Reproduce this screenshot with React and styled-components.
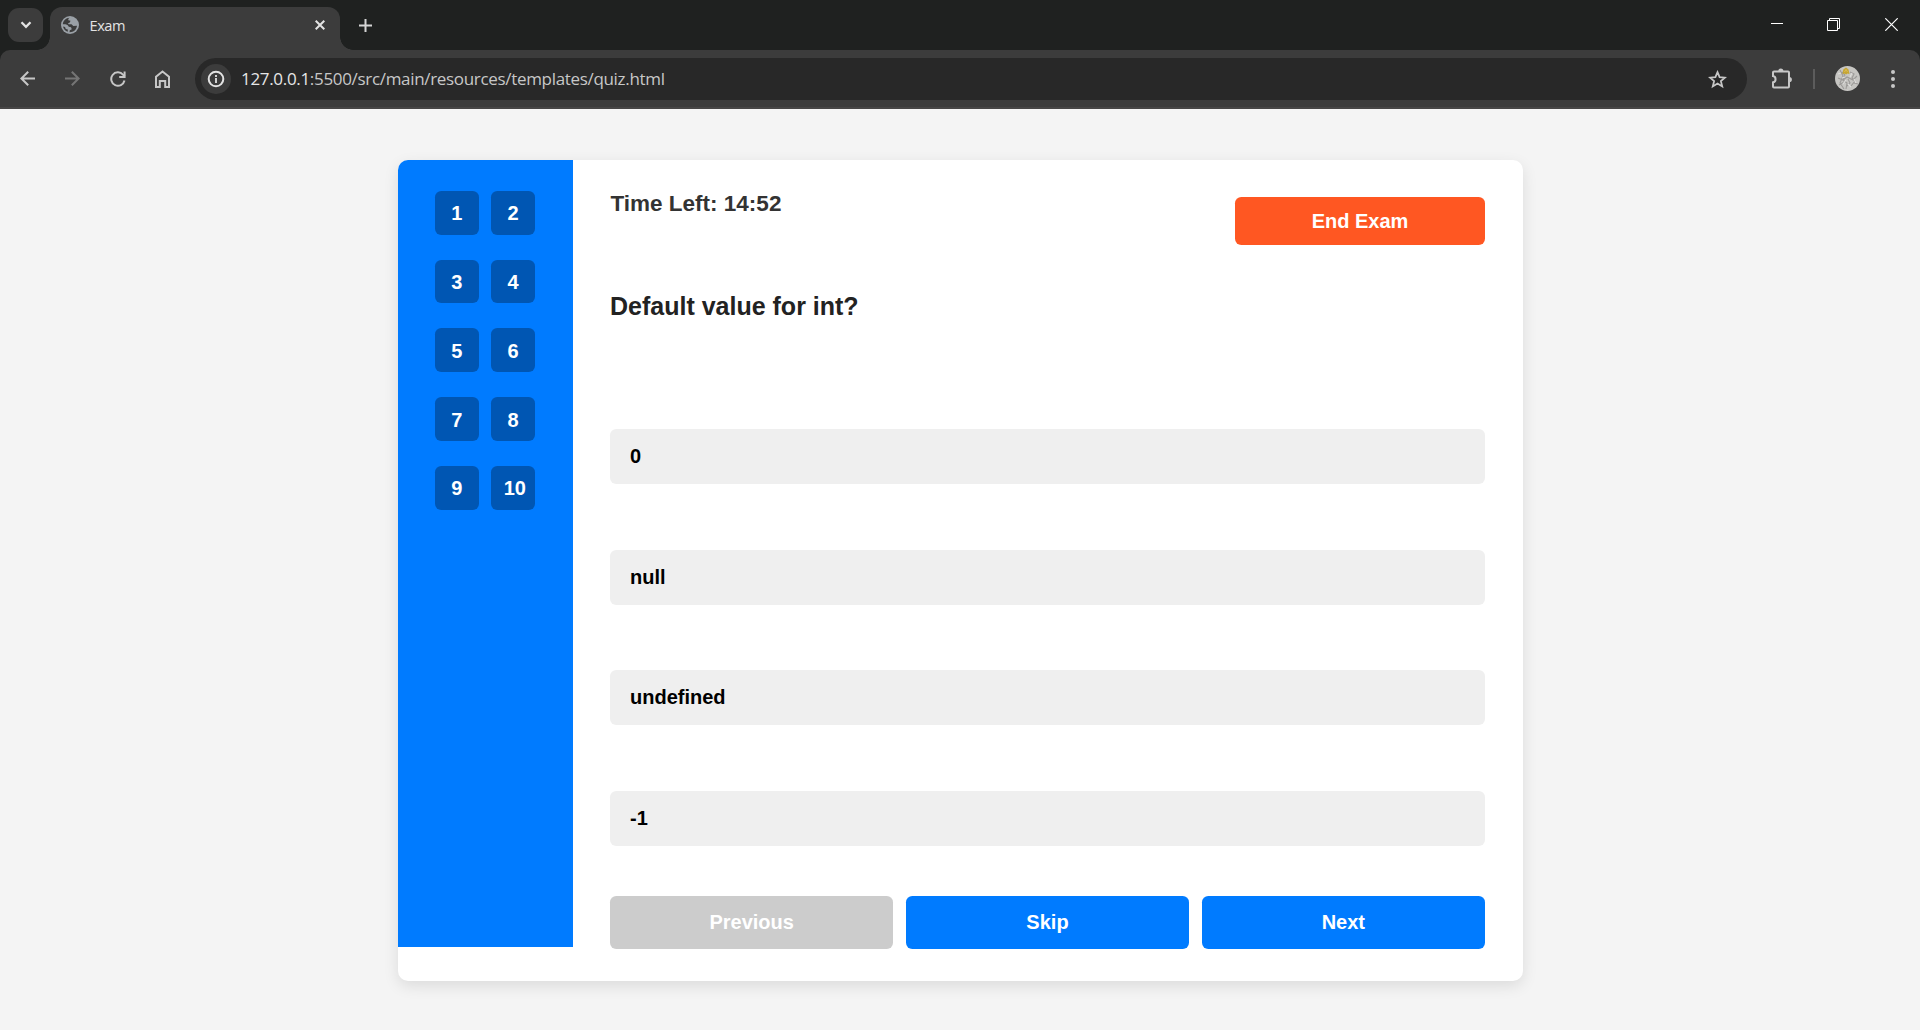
import React, { useState } from 'react';
import styled, { createGlobalStyle } from 'styled-components';

const GlobalStyle = createGlobalStyle`
  *, *::before, *::after { box-sizing: border-box; }
  body {
    margin: 0;
    background: #f4f4f4;
    font-family: "Liberation Sans", Arial, sans-serif;
    overflow: hidden;
  }
  button { font: inherit; border: 0; margin: 0; cursor: pointer; }
  svg { display: block; flex: none; }
`;

const Window = styled.div`
  height: 1030px;
  display: flex;
  flex-direction: column;
`;

const TabStrip = styled.div`
  height: 50px;
  background: #1f2120;
  display: flex;
  align-items: flex-start;
`;

const TabSearch = styled.button`
  width: 35px;
  height: 34px;
  margin: 8px 0 0 8px;
  padding: 0;
  border-radius: 11px;
  background: #3c3c3c;
  display: grid;
  place-items: center;
`;

const TabFlare = styled.span`
  width: 13px;
  height: 13px;
  margin-left: ${(p) => (p.$side === 'left' ? '-6px' : '0')};
  align-self: flex-end;
  background: radial-gradient(
    circle at ${(p) => (p.$side === 'left' ? '0 0' : '100% 0')},
    transparent 12.5px,
    #3c3c3c 13px
  );
`;

const Tab = styled.div`
  width: 290px;
  height: 43px;
  margin-top: 7px;
  padding: 0 15px 7px 11px;
  border-radius: 12px 12px 0 0;
  background: #3c3c3c;
  display: flex;
  align-items: center;
`;

const TabTitle = styled.span`
  flex: 1;
  margin-left: 10.5px;
  font: 14.6px/20px "Open Sans", "Noto Sans", sans-serif;
  letter-spacing: -0.45px;
  color: #e3e3e3;
`;

const NewTab = styled.div`
  margin: 19px 0 0 6px;
`;

const WindowControls = styled.div`
  margin: 18px 22px 0 auto;
  display: flex;
  gap: 44px;
`;

const ToolbarBack = styled.div`
  background: #1f2120;
`;

const Toolbar = styled.div`
  height: 59px;
  padding: 0 0 0 5px;
  border-bottom: 2px solid #474646;
  border-radius: 10px 10px 0 0;
  background: #3c3c3c;
  display: flex;
  align-items: center;
`;

const ToolCell = styled.div`
  flex: none;
  width: ${(p) => p.$width || 45}px;
  display: grid;
  place-items: center;
`;

const AddressBar = styled.div`
  flex: none;
  width: 1552px;
  height: 42px;
  margin: 1px 12px 0 10px;
  padding: 0 20px 0 6px;
  border-radius: 21px;
  background: #282828;
  display: flex;
  align-items: center;
`;

const SiteInfo = styled.span`
  width: 30px;
  height: 30px;
  border-radius: 50%;
  background: #3c3c3c;
  display: grid;
  place-items: center;
`;

const Url = styled.span`
  flex: 1;
  margin-left: 10px;
  font: 17px/24px "Open Sans", "Noto Sans", sans-serif;
  letter-spacing: -0.32px;
  color: #c7c7c7;
`;

const Host = styled.span`
  color: #e6e6e6;
`;

const Divider = styled.span`
  flex: none;
  width: 2px;
  height: 20px;
  margin: 0 20.5px 0 8.5px;
  background: #5c5c5c;
`;

const Profile = styled.div`
  flex: none;
  margin-right: 5px;
`;

const Page = styled.main`
  flex: 1;
  padding-top: 51px;
  background: #f4f4f4;
`;

const ExamCard = styled.section`
  width: 1125px;
  height: 821px;
  margin: 0 auto;
  border-radius: 10px;
  background: #fff;
  box-shadow: 0 5px 15px rgba(0, 0, 0, 0.1);
  display: flex;
  align-items: flex-start;
`;

const Sidebar = styled.aside`
  width: 175px;
  height: 787px;
  padding: 30.75px 37.5px 0;
  border-top-left-radius: 10px;
  background: #007bff;
  display: grid;
  grid-template-columns: repeat(2, 43.75px);
  grid-auto-rows: 43.75px;
  gap: 25px 12.5px;
  align-content: start;
`;

const NumberButton = styled.button`
  width: 43.75px;
  height: 43.75px;
  padding: 2.5px 0 0 ${(p) => (p.$wide ? '3.5px' : '0')};
  border-radius: 6.25px;
  background: #0056b3;
  color: #fff;
  font-size: 20px;
  font-weight: 700;
  text-align: center;
`;

const Content = styled.div`
  flex: 1;
  padding: 30px 37.5px 0;
`;

const Header = styled.header`
  height: 102px;
  display: flex;
  justify-content: space-between;
  align-items: flex-start;
`;

const Timer = styled.div`
  padding: 1px 0 0 0.5px;
  font-size: 22.5px;
  line-height: 26px;
  font-weight: 700;
  color: #333;
`;

const EndButton = styled.button`
  width: 250px;
  height: 48px;
  margin-top: 7px;
  border-radius: 6.25px;
  background: #ff5722;
  color: #fff;
  font-size: 20px;
  font-weight: 700;
`;

const Question = styled.h2`
  height: 137px;
  margin: 0;
  font-size: 25px;
  line-height: 29px;
  color: #222;
`;

const Options = styled.div`
  display: flex;
  flex-direction: column;
  gap: 65.625px;
`;

const Option = styled.button`
  height: 55px;
  padding: 0 20px;
  border-radius: 6.25px;
  background: #efefef;
  color: #000;
  font-size: 20px;
  font-weight: 700;
  text-align: left;
`;

const Navigation = styled.nav`
  margin-top: 50px;
  display: flex;
  gap: 12.5px;
`;

const NavButton = styled.button`
  flex: 1;
  height: 53px;
  border-radius: 6.25px;
  background: ${(p) => (p.disabled ? '#ccc' : '#007bff')};
  color: #fff;
  font-size: 20px;
  font-weight: 700;
`;

const Icon = ({ w, h, color = '#c7c7c7', stroke = 2, children }) => (
  <svg width={w} height={h} viewBox={`0 0 ${w} ${h}`} fill="none" stroke={color} strokeWidth={stroke}>
    {children}
  </svg>
);

const Globe = () => (
  <svg width="18" height="18" viewBox="0 0 18 18">
    <circle cx="9" cy="9" r="9" fill="#9aa0a6" />
    <path d="M1.800 8.300C2 4.600 4.900 1.900 8.600 1.700 7.400 2.300 7 3.300 7.400 4.200L9.500 4.800 8.800 6.500 7 7.200 7.600 8.300H10.500L12.300 10 16 9.700C15.700 13.500 12.500 16.300 8.500 16.200L8.800 14.300 10.800 13.200 10 11.300 7.800 10.700 6.500 9 4.500 8.300Z" fill="#3c3c3c" />
    <path d="M2 10.500 4 11 4.800 13 6.800 13.500V15.700C4.300 15 2.500 13 2 10.500Z" fill="#3c3c3c" />
  </svg>
);

const Avatar = () => (
  <svg width="25" height="25" viewBox="0 0 25 25">
    <defs>
      <clipPath id="avatar-clip"><circle cx="12.500" cy="12.500" r="12.500" /></clipPath>
    </defs>
    <g clipPath="url(#avatar-clip)" fill="none">
      <rect width="25" height="25" fill="#c6c5c2" />
      <path d="M5 4 8 10 5 17 9 23M3 12l5 2 4-3 6 3 4-4M10 9l-2 5 4 3-1 6M15 6l4 2-2 4 3 3-4 5M7 6l3 3M13 13l2 4-3 3M19 17l4 1M4 19l5-3" stroke="#9c9a98" strokeWidth="1.100" />
      <path d="m3 8 3-1m2 11 3-4m4-3 2-4m2 6 2 4m-8 1 3 3M7 12l3-1" stroke="#dedddb" strokeWidth="1.200" />
      <path d="m7.500 8 .8-4.500 2.700-2 2.500 2 1 4.500-2.200-.5-1.100 1-1.500-1Z" fill="#c6a632" />
      <path d="m9.500 6 1.500-2.500 1.500 2.500" stroke="#d9bb55" />
    </g>
  </svg>
);

const answers = ['0', 'null', 'undefined', '-1'];
const numbers = Array.from({ length: 10 }, (_, i) => i + 1);

function BrowserChrome() {
  return (
    <>
      <TabStrip>
        <TabSearch aria-label="Search tabs">
          <Icon w={12} h={8} color="#e3e3e3" stroke={2.3}><path d="m1.500 1.300 4.500 4.500 4.500-4.500" /></Icon>
        </TabSearch>
        <TabFlare $side="left" />
        <Tab>
          <Globe />
          <TabTitle>Exam</TabTitle>
          <Icon w={10} h={10} color="#e3e3e3"><path d="m.7.7 8.600 8.600m0-8.600L.7 9.300" /></Icon>
        </Tab>
        <TabFlare $side="right" />
        <NewTab>
          <Icon w={13} h={13} color="#d5d5d5"><path d="M6.500 0v13M0 6.500h13" /></Icon>
        </NewTab>
        <WindowControls>
          <Icon w={13} h={13} color="#fff" stroke={1}><path d="M1 5.500h12" /></Icon>
          <Icon w={14} h={13} color="#fff" stroke={1}>
            <path d="M.5 2.500h10v10H.5ZM2.500 2.500v-2h10v10h-2" />
          </Icon>
          <Icon w={13} h={13} color="#fff" stroke={1.2}><path d="m.3.3 12.400 12.400m0-12.400L.3 12.700" /></Icon>
        </WindowControls>
      </TabStrip>
      <ToolbarBack>
        <Toolbar>
          <ToolCell>
            <Icon w={15} h={15}><path d="M15 7.500H1.500M8.200.7 1.400 7.500l6.800 6.800" /></Icon>
          </ToolCell>
          <ToolCell>
            <Icon w={15} h={15} color="#757575"><path d="M0 7.500h13.500M6.800.7l6.800 6.800-6.800 6.800" /></Icon>
          </ToolCell>
          <ToolCell>
            <Icon w={16} h={16}>
              <path d="M14.500 9.500A6.700 6.700 0 1 1 13 3.600l1.700 1.900" />
              <path d="M14.600 .5v5.500H9.200" />
            </Icon>
          </ToolCell>
          <ToolCell>
            <Icon w={15} h={18}>
              <path d="M1 17V6.800l6.500-5.300L14 6.800V17h-3.800v-6H4.800v6Z" />
            </Icon>
          </ToolCell>
          <AddressBar>
            <SiteInfo>
              <Icon w={18} h={18} color="#e3e3e3">
                <circle cx="9" cy="9" r="7.300" />
                <path d="M9 8v5M9 5v2" strokeWidth="1.800" />
              </Icon>
            </SiteInfo>
            <Url><Host>127.0.0.1</Host>:5500/src/main/resources/templates/quiz.html</Url>
            <Icon w={19} h={19} stroke={1.8}>
              <path d="m9.500 2.200 2.100 4.900 5.400.5-4.100 3.500 1.300 5.300-4.700-2.800-4.700 2.800 1.300-5.300L2 7.600l5.400-.5Z" />
            </Icon>
          </AddressBar>
          <ToolCell>
            <svg width="21" height="21" viewBox="0 0 21 21" fill="none">
              <path d="M3 3.500h14a1 1 0 0 1 1 1V18.500a1 1 0 0 1-1 1H3a1 1 0 0 1-1-1v-4.200c3.400-.4 3.400-5.800 0-6.200V4.500a1 1 0 0 1 1-1Z" stroke="#c7c7c7" strokeWidth="2" />
              <path d="M7.200 3.200a2.600 2.600 0 0 1 5.200 0ZM18.300 8.900a2.600 2.600 0 0 1 0 5.200Z" fill="#c7c7c7" />
            </svg>
          </ToolCell>
          <Divider />
          <Profile><Avatar /></Profile>
          <ToolCell $width={55}>
            <svg width="4" height="18" viewBox="0 0 4 18" fill="#c7c7c7">
              <circle cx="2" cy="2" r="2" /><circle cx="2" cy="9" r="2" /><circle cx="2" cy="16" r="2" />
            </svg>
          </ToolCell>
        </Toolbar>
      </ToolbarBack>
    </>
  );
}

export default function App() {
  const [, setAnswer] = useState(null);
  return (
    <Window>
      <GlobalStyle />
      <BrowserChrome />
      <Page>
        <ExamCard>
          <Sidebar>
            {numbers.map((n) => (
              <NumberButton key={n} $wide={n > 9}>{n}</NumberButton>
            ))}
          </Sidebar>
          <Content>
            <Header>
              <Timer>Time Left: 14:52</Timer>
              <EndButton>End Exam</EndButton>
            </Header>
            <Question>Default value for int?</Question>
            <Options>
              {answers.map((answer) => (
                <Option key={answer} onClick={() => setAnswer(answer)}>{answer}</Option>
              ))}
            </Options>
            <Navigation>
              <NavButton disabled>Previous</NavButton>
              <NavButton>Skip</NavButton>
              <NavButton>Next</NavButton>
            </Navigation>
          </Content>
        </ExamCard>
      </Page>
    </Window>
  );
}
